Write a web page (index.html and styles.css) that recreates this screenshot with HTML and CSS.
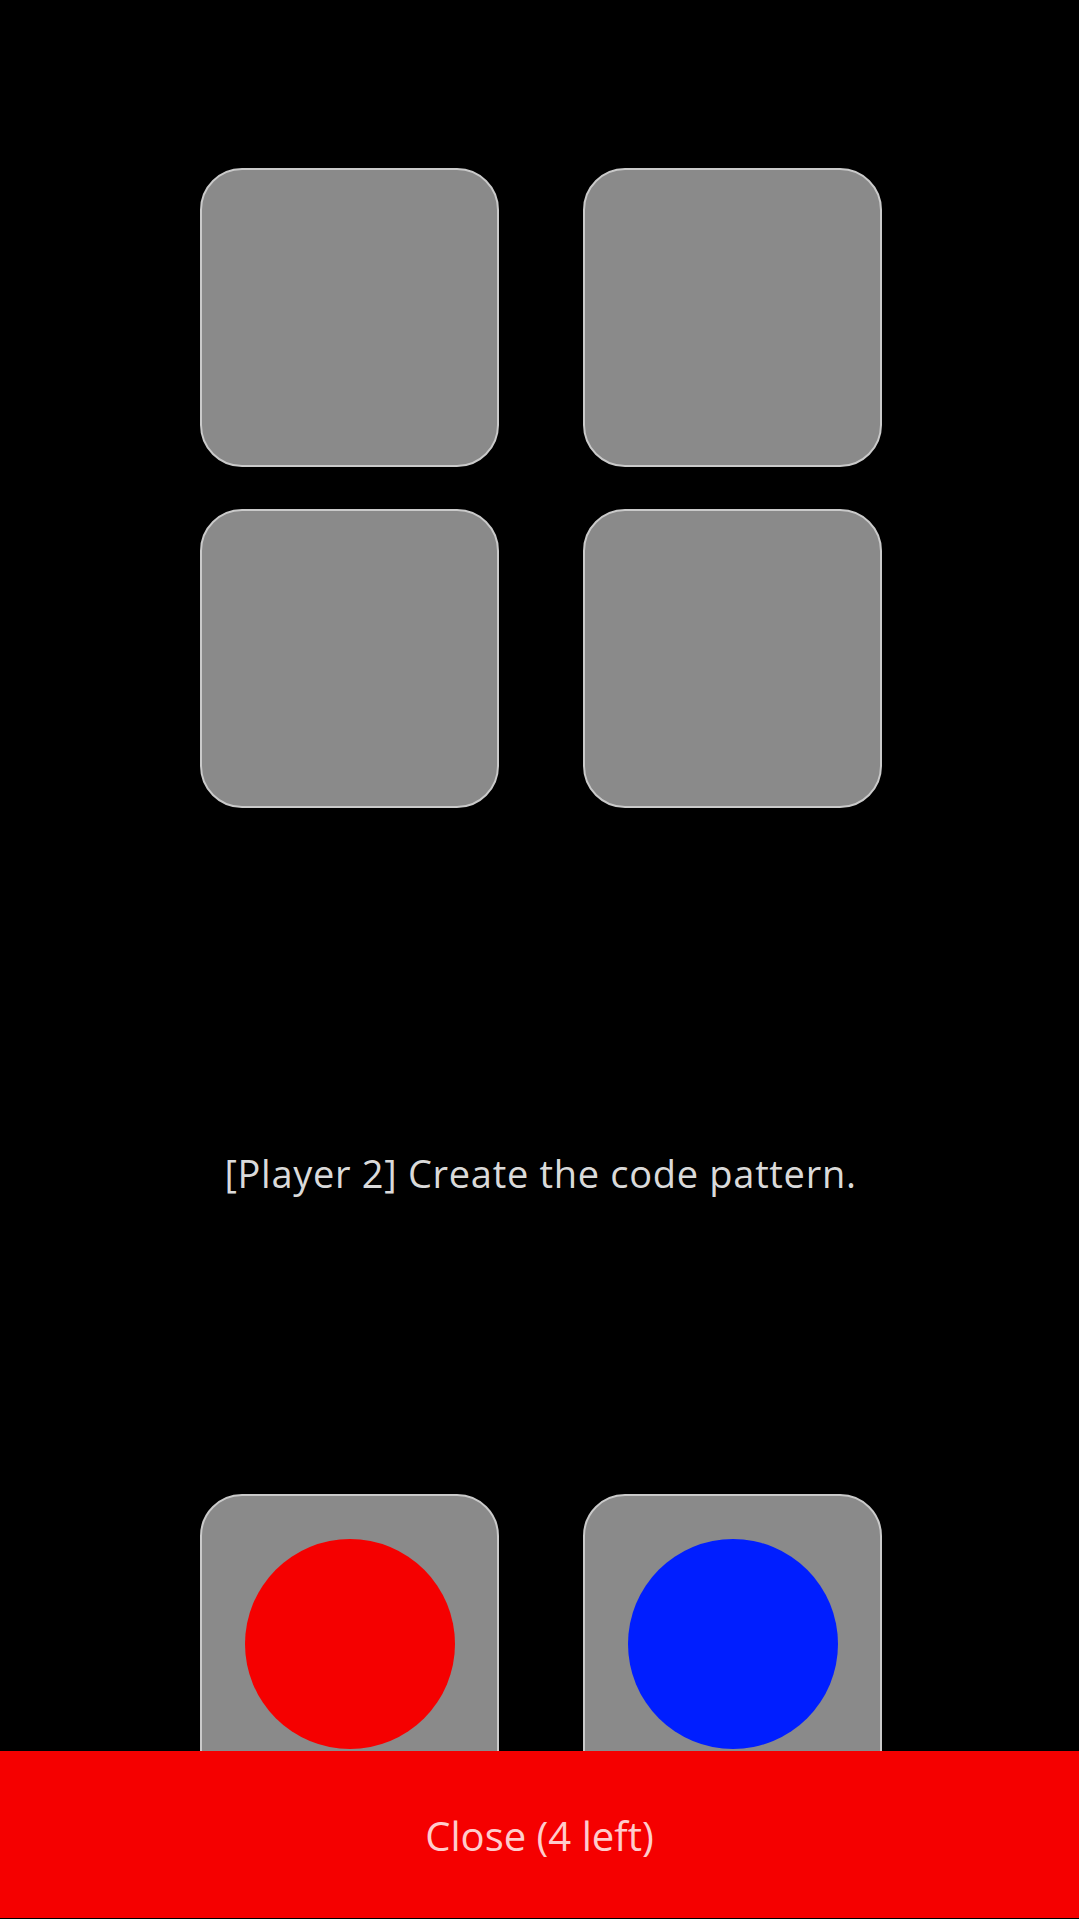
FILE: index.html
```html
<!DOCTYPE html>
<html lang="en">
<head>
<meta charset="utf-8">
<title>Code pattern</title>
<link rel="stylesheet" href="styles.css">
</head>
<body>
<main class="screen">
  <div class="board">
    <div class="tile"></div>
    <div class="tile"></div>
    <div class="tile"></div>
    <div class="tile"></div>
  </div>
  <p class="prompt">[Player 2] Create the code pattern.</p>
  <div class="board palette">
    <div class="tile"><span class="dot dot-red"></span></div>
    <div class="tile"><span class="dot dot-blue"></span></div>
  </div>
</main>
<button class="close-bar" type="button">Close (4 left)</button>
</body>
</html>
```
FILE: styles.css
```css
html, body {
  margin: 0;
  padding: 0;
  background: #000;
  height: 100%;
  overflow: hidden;
}
body {
  font-family: "Open Sans", "Noto Sans", sans-serif;
}
.screen {
  display: flex;
  flex-direction: column;
  padding-top: 168px;
}
.board {
  display: grid;
  grid-template-columns: 299px 299px;
  column-gap: 84px;
  row-gap: 42px;
  margin-left: 200px;
}
.tile {
  box-sizing: border-box;
  width: 299px;
  height: 299px;
  background: #8a8a8a;
  border: 2px solid #cacaca;
  border-radius: 42px;
  display: flex;
  align-items: center;
  justify-content: center;
}
.prompt {
  margin: 341px 0 0;
  text-align: center;
  color: #dadada;
  font-size: 38px;
  letter-spacing: 0.7px;
  line-height: 48px;
  padding-left: 2px;
}
.palette {
  margin-top: 297px;
}
.dot {
  width: 210px;
  height: 210px;
  border-radius: 50%;
}
.dot-red { background: #f50000; }
.dot-blue { background: #001eff; }
.close-bar {
  position: fixed;
  left: 0;
  right: 0;
  bottom: 1px;
  height: 167px;
  margin: 0;
  padding: 2px 0 0;
  border: 0;
  background: #f50000;
  color: #ffcccc;
  font-family: "Open Sans", "Noto Sans", sans-serif;
  font-size: 40px;
  line-height: 165px;
  text-align: center;
}
```
